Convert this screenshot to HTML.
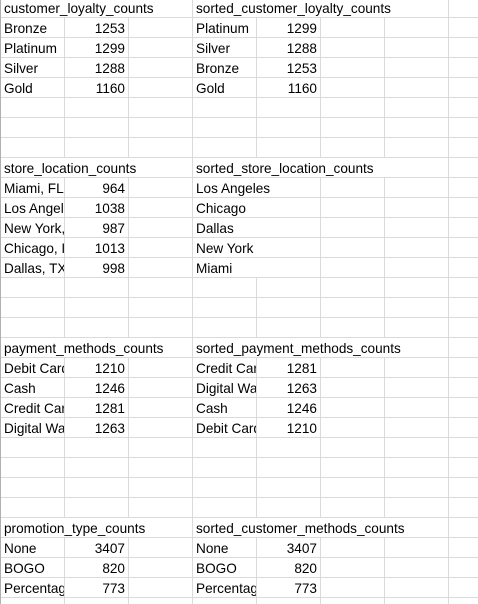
<!DOCTYPE html>
<html><head><meta charset="utf-8"><style>
html,body{margin:0;padding:0;width:478px;height:604px;overflow:hidden;background:#fff}
#g{position:absolute;left:0;top:0;width:478px;height:604px;
background-image:linear-gradient(to right,#dadada 1px,transparent 1px),linear-gradient(to bottom,#dadada 1px,transparent 1px);
background-size:64px 20px;background-position:0 17px;}
#l{position:absolute;left:0;top:0;width:1px;height:604px;background:#b0b0b0}
.c{position:absolute;height:19px;line-height:21px;font-family:"Liberation Sans",sans-serif;font-size:13.6px;color:#000;background:#fff;white-space:nowrap;overflow:hidden;box-sizing:border-box;padding-left:3px}
.n{text-align:right;padding-right:3px;padding-left:0}
</style></head><body>
<div id="g"></div><div id="l"></div>
<div id="c"></div>
<script>
const rows=[
[0,"customer_loyalty_counts",null,"sorted_customer_loyalty_counts",null],
[1,"Bronze","1253","Platinum","1299"],[2,"Platinum","1299","Silver","1288"],[3,"Silver","1288","Bronze","1253"],[4,"Gold","1160","Gold","1160"],
[8,"store_location_counts",null,"sorted_store_location_counts",null],
[9,"Miami, FL","964","Los Angeles",""],[10,"Los Angeles","1038","Chicago",""],[11,"New York, NY","987","Dallas",""],[12,"Chicago, IL","1013","New York",""],[13,"Dallas, TX","998","Miami",""],
[17,"payment_methods_counts",null,"sorted_payment_methods_counts",null],
[18,"Debit Card","1210","Credit Card","1281"],[19,"Cash","1246","Digital Wallet","1263"],[20,"Credit Card","1281","Cash","1246"],[21,"Digital Wallet","1263","Debit Card","1210"],
[26,"promotion_type_counts",null,"sorted_customer_methods_counts",null],
[27,"None","3407","None","3407"],[28,"BOGO","820","BOGO","820"],[29,"Percentage","773","Percentage","773"]];
let h="";
for(const [r,a,b,d,e] of rows){
 const t=-2+20*r;
 if(b===null){
  h+=`<div class="c" style="left:1px;top:${t}px;width:190px">${a}</div>`;
  h+=`<div class="c" style="left:193px;top:${t}px;width:254px">${d}</div>`;
 }else{
  const dw=(e==="")?127:63;
  h+=`<div class="c" style="left:1px;top:${t}px;width:63px">${a}</div>`;
  h+=`<div class="c n" style="left:65px;top:${t}px;width:63px">${b}</div>`;
  h+=`<div class="c" style="left:193px;top:${t}px;width:${dw}px">${d}</div>`;
  if(e!=="")h+=`<div class="c n" style="left:257px;top:${t}px;width:63px">${e}</div>`;
 }
}
document.getElementById("c").innerHTML=h;
</script>
</body></html>
